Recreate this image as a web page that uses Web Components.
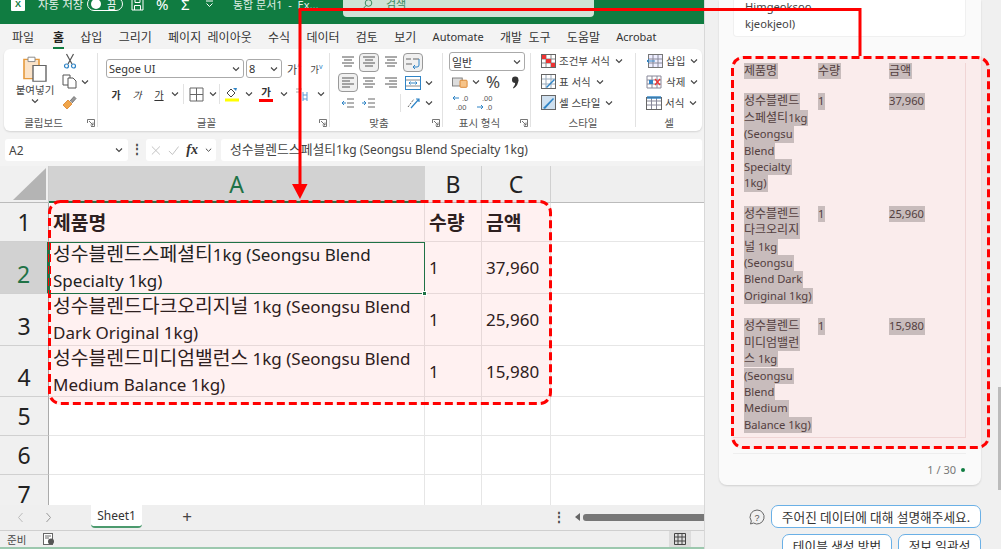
<!DOCTYPE html>
<html lang="ko">
<head>
<meta charset="utf-8">
<title>Excel</title>
<style>
  html, body { margin: 0; height: 100%; overflow: hidden; background: #f0f0f0; }
  body { font-family: "Noto Sans", "Noto Sans CJK KR", sans-serif; }
</style>
</head>
<body>
<excel-page></excel-page>
<script>
const FONT = `"Noto Sans", "Noto Sans CJK KR", sans-serif`;
const chev = `<svg width="8" height="8" viewBox="0 0 8 8"><path d="M1 2.5 4 5.5 7 2.5" fill="none" stroke="#444" stroke-width="1.1"/></svg>`;
// hangul runs are set a little larger than latin, as in the reference
const ko = s => s.replace(/[\uAC00-\uD7A3]+/g, m => `<span class="k">${m}</span>`);

const ICONS = {
  paste: `<svg width="26" height="28" viewBox="0 0 26 32" preserveAspectRatio="none"><path d="M2 5h15v22H2z" fill="#fbe3c8" stroke="#e59a3e" stroke-width="1.6"/><path d="M6 2.500h7v5H6z" fill="#fff" stroke="#888"/><path d="M11 12h13v18H11z" fill="#fff" stroke="#666" stroke-width="1.4"/></svg>`,
  cut: `<svg width="14" height="16" viewBox="0 0 14 16"><path d="M3.500 1 9 11M10.500 1 5 11" stroke="#555" stroke-width="1.2" fill="none"/><circle cx="3.500" cy="13" r="2" fill="none" stroke="#2f84c6" stroke-width="1.2"/><circle cx="10.500" cy="13" r="2" fill="none" stroke="#2f84c6" stroke-width="1.2"/></svg>`,
  copy: `<svg width="16" height="15" viewBox="0 0 16 15"><path d="M1 1h7v10H1z" fill="#fff" stroke="#555"/><path d="M6 4h5l3 3v7H6z" fill="#fff" stroke="#555"/></svg>`,
  brush: `<svg width="15" height="15" viewBox="0 0 15 15"><path d="M1 10 6 5l4 4-5 5z" fill="#f0a54a" stroke="#d9822b" stroke-width=".8"/><path d="M8 6l4-4.500 2 2L10 8" fill="#999" stroke="#666" stroke-width=".8"/></svg>`,
  borders: `<svg width="15" height="15" viewBox="0 0 15 15"><path d="M1 1h13v13H1zM7.500 1v13M1 7.500h13" fill="none" stroke="#666"/></svg>`,
  fill: `<svg width="14" height="16" viewBox="0 0 14 16"><path d="M2 7l4-4 4 4-4 4z" fill="#fff" stroke="#444"/><path d="M8 2l3 3 1-3z" fill="#2f84c6"/><rect y="12.500" width="14" height="3" fill="#ffff00"/></svg>`,
  wrapPh: `<svg width="15" height="15" viewBox="0 0 15 15"><path d="M8 5v9M12 5v9M8 8h4M8 12h4" stroke="#5b9bd5" fill="none"/><path d="M1 2h6M1 5h5" stroke="#aaa"/></svg>`,
  lines(a, b, c, d) {
    const p = [a, b, c, d].map((w, i) => `M${w[0]} ${2 + i * 3}H${w[1]}`).join('');
    return `<svg width="14" height="14" viewBox="0 0 14 14"><path d="${p}" stroke="#555" fill="none"/></svg>`;
  },
  wrap: `<svg width="18" height="18" viewBox="0 0 18 18"><path d="M2 6h5M9 6h6M2 11h6" stroke="#666" fill="none"/><path d="M15 6v6q0 2-2 2H9m2-2-2 2 2 2" stroke="#2f84c6" fill="none"/></svg>`,
  merge: `<svg width="16" height="14" viewBox="0 0 16 14"><rect x=".5" y=".5" width="15" height="13" fill="#fff" stroke="#2f84c6"/><path d="M1 4h14M1 10h14" stroke="#888"/><path d="M4 7h8M5.500 5.500 4 7l1.500 1.500M10.500 5.500 12 7l-1.500 1.500" stroke="#2f84c6" fill="none"/></svg>`,
  indentL: `<svg width="14" height="14" viewBox="0 0 14 14"><path d="M6 3h7M6 7h7M6 11h7" stroke="#666"/><path d="M5 7H1m2-2L1 7l2 2" stroke="#2f84c6" fill="none"/></svg>`,
  indentR: `<svg width="14" height="14" viewBox="0 0 14 14"><path d="M6 3h7M6 7h7M6 11h7" stroke="#666"/><path d="M0 7h4M2 5l2 2-2 2" stroke="#2f84c6" fill="none"/></svg>`,
  orient: `<svg width="16" height="14" viewBox="0 0 16 14"><path d="M3 11 9 3" stroke="#666" stroke-dasharray="2 1.200"/><path d="M6 12 14 3m-3 0h3v3" stroke="#2f84c6" fill="none" stroke-width="1.200"/></svg>`,
  currency: `<svg width="16" height="14" viewBox="0 0 18 14"><rect x=".5" y="2.500" width="11" height="9" fill="#ddd" stroke="#777"/><rect x="9" y="5" width="8" height="8" rx="1" fill="#f6c48a" stroke="#d9822b"/></svg>`,
  comma: `<svg width="8" height="13" viewBox="0 0 8 13"><circle cx="4.200" cy="3.700" r="3.200" fill="#333"/><path d="M7.400 3.700Q7.600 9 2.500 12.500L2 11.800Q4.500 9 4.300 6z" fill="#333"/></svg>`,
  decUp: `<svg width="20" height="18" viewBox="0 0 20 18"><path d="M7 4H1m2-2L1 4l2 2" stroke="#2f84c6" fill="none"/><text x="10" y="7" font-size="7.500" font-family="Liberation Sans" fill="#555">.0</text><text x="4" y="16" font-size="7.500" font-family="Liberation Sans" fill="#555">.00</text></svg>`,
  decDown: `<svg width="20" height="18" viewBox="0 0 20 18"><text x="6" y="7" font-size="7.500" font-family="Liberation Sans" fill="#555">.00</text><path d="M1 13h6m-2-2 2 2-2 2" stroke="#2f84c6" fill="none"/><text x="10" y="16" font-size="7.500" font-family="Liberation Sans" fill="#555">.0</text></svg>`,
  cond: `<svg width="15" height="14" viewBox="0 0 15 14"><rect x=".5" y=".5" width="14" height="13" fill="#fff" stroke="#666"/><path d="M5 1v12M10 1v12M1 5h13M1 9h13" stroke="#888"/><rect x="1" y="1" width="4" height="4" fill="#e33"/><rect x="5" y="5" width="5" height="4" fill="#e33"/><rect x="10" y="9" width="4" height="4" fill="#e33"/></svg>`,
  table: `<svg width="15" height="15" viewBox="0 0 15 15"><rect x=".5" y=".5" width="14" height="14" fill="#fff" stroke="#666"/><path d="M1 5h13M1 10h13M5 1v13M10 1v13" stroke="#9ab"/><path d="M5 13 13 5l1 1-8 8z" fill="#2f84c6"/></svg>`,
  cellStyle: `<svg width="15" height="15" viewBox="0 0 15 15"><rect x=".5" y=".5" width="14" height="14" fill="#cfe0ef" stroke="#666"/><path d="M2 13 12 3l1 1L4 14z" fill="#2f84c6"/></svg>`,
  insert: `<svg width="17" height="14" viewBox="0 0 17 14"><rect x="2.500" y=".5" width="14" height="13" fill="#eef" stroke="#777"/><path d="M7 1v12M12 1v12M3 5h13M3 9h13" stroke="#889"/><path d="M9 7H1m2-2L1 7l2 2" stroke="#2f84c6" fill="none"/></svg>`,
  del: `<svg width="17" height="14" viewBox="0 0 17 14"><path d="M1 1h14v12H1zM1 5h14M1 9h14M6 1v12M11 1v12" stroke="#889" fill="#fff"/><path d="M9 4l5 6m0-6-5 6" stroke="#e33" stroke-width="1.300"/><rect x="3" y="5" width="4" height="4" fill="#2f84c6"/></svg>`,
  format: `<svg width="16" height="15" viewBox="0 0 16 15"><rect x=".5" y="2.500" width="15" height="12" fill="#fff" stroke="#666"/><path d="M1 6h14M1 10h14M5.500 3v11M10.500 3v11" stroke="#889"/><rect x="1" y="1" width="14" height="3" fill="#2f84c6" opacity=".7"/></svg>`,
  launcher: `<svg width="8" height="8" viewBox="0 0 8 8"><path d="M.5 4V.5H7.500V7.500H4M2 2l4 4M6 3.500V6H3.500" fill="none" stroke="#666" stroke-width=".9"/></svg>`
};

class ExcelPage extends HTMLElement {
  constructor() {
    super();
    this.attachShadow({ mode: 'open' });
    this.shadowRoot.innerHTML = `
      <style>
        :host { display: flex; width: 1001px; height: 549px; position: relative; overflow: hidden; font-family: ${FONT}; }
        excel-window { width: 705px; flex: none; }
        chat-panel { flex: 1; }
      </style>
      <excel-window></excel-window>
      <chat-panel></chat-panel>
      <note-overlay></note-overlay>
    `;
  }
}

class ExcelWindow extends HTMLElement {
  constructor() {
    super();
    this.attachShadow({ mode: 'open' });
    this.shadowRoot.innerHTML = `
      <style>
        :host { display: flex; flex-direction: column; height: 549px; background: #f3f3f3; border-right: 1px solid #d8d8d8; box-sizing: border-box; }
        sheet-grid { flex: none; }
      </style>
      <title-bar></title-bar>
      <ribbon-tabs></ribbon-tabs>
      <ribbon-bar></ribbon-bar>
      <formula-bar></formula-bar>
      <sheet-grid></sheet-grid>
      <sheet-tabs></sheet-tabs>
      <status-bar></status-bar>
    `;
  }
}

class TitleBar extends HTMLElement {
  constructor() {
    super();
    this.attachShadow({ mode: 'open' });
    this.shadowRoot.innerHTML = `
      <style>
        :host { display: block; height: 24px; background: #107c41; color: #fff; overflow: hidden; font-size: 11px; flex: none; }
        .row { display: flex; align-items: center; height: 8px; }
        .logo { width: 14px; height: 13px; margin-left: 11px; background: #fff; color: #107c41; font: 700 9px "Liberation Sans", sans-serif; display: flex; align-items: center; justify-content: center; border-radius: 1px; }
        .auto { margin-left: 13px; width: 49px; white-space: nowrap; color: #e8f2ec; font-size: 11.500px; }
        .toggle { width: 36px; height: 14px; border: 1px solid #fff; border-radius: 8px; box-sizing: border-box; display: flex; align-items: center; gap: 6px; padding-left: 3px; font-size: 10px; }
        .toggle i { width: 10px; height: 10px; background: #fff; border-radius: 50%; display: block; }
        .sym { margin-left: 8px; display: flex; align-items: center; font-size: 15px; width: 102px; }
        .sym > * { flex: none; }
        .doc { width: 110px; white-space: nowrap; color: #dfeee5; }
        .search { align-self: flex-start; width: 251px; height: 17px; background: #cfe3d6; border-radius: 0 0 4px 4px; color: #3c8a60; display: flex; align-items: center; gap: 13px; padding-left: 20px; box-sizing: border-box; font-size: 11px; line-height: 8px; }
        .search span, .search svg { position: relative; top: -5px; }
      </style>
      <div class="row">
        <div class="logo">X</div>
        <div class="auto">자동 저장</div>
        <div class="toggle"><i></i><span>끔</span></div>
        <div class="sym">
          <svg width="13" height="13" viewBox="0 0 13 13"><path d="M1 1h11v11H1zM4 1v3.500h5V1M3.500 12V7.500h6V12" fill="none" stroke="#fff"/></svg>
          <span style="margin-left:12px;width:17px">%</span>
          <span style="margin-left:8px;width:11px">Σ</span>
          <svg style="margin-left:13px" width="9" height="8" viewBox="0 0 9 8"><path d="M1 1h7M1.500 3.500 4.500 6.500l3-3" fill="none" stroke="#fff"/></svg>
        </div>
        <div class="doc">통합 문서1 &nbsp;- &nbsp;Ex...</div>
        <div class="search">
          <svg width="10" height="10" viewBox="0 0 10 10"><circle cx="5.500" cy="4" r="3.300" fill="none" stroke="#3c8a60"/><path d="M3 6.500.8 9" stroke="#3c8a60"/></svg>
          <span>검색</span>
        </div>
      </div>
    `;
  }
}

class RibbonTabs extends HTMLElement {
  constructor() {
    super();
    this.attachShadow({ mode: 'open' });
    const tabs = ['파일', '홈', '삽입', '그리기', '페이지 레이아웃', '수식', '데이터', '검토', '보기', 'Automate', '개발 도구', '도움말', 'Acrobat'];
    this.shadowRoot.innerHTML = `
      <style>
        :host { display: flex; flex: none; height: 25px; gap: 16.300px; padding-left: 12px; align-items: center; font-size: 11px; color: #333; white-space: nowrap; background: #f3f3f3; box-sizing: border-box; word-spacing: 3.500px; }
        .t { position: relative; }
        .k { font-size: 12px; }
        .on { color: #222; font-weight: 600; margin-left: 2.500px; }
        .on::after { content: ""; position: absolute; left: 0; right: 0; bottom: -3px; height: 2px; background: #107c41; }
      </style>
      ${tabs.map(t => `<span class="t ${t === '홈' ? 'on' : ''}">${ko(t)}</span>`).join('')}
    `;
  }
}

class RibbonGroup extends HTMLElement {
  constructor() {
    super();
    this.attachShadow({ mode: 'open' });
    const launcher = this.hasAttribute('launcher');
    this.shadowRoot.innerHTML = `
      <style>
        :host { display: flex; flex-direction: column; position: relative; box-sizing: border-box; border-right: 1px solid #e2e2e2; font-size: 10.500px; color: #444; margin-top: 4px; height: 74px; }
        :host(:last-child) { border-right: 0; }
        .body { flex: 1; min-height: 0; }
        .label { height: 17px; margin-bottom: -4px; display: flex; align-items: center; justify-content: center; font-size: 10.500px; color: #555; padding-right: ${launcher ? 14 : 0}px; flex: none; }
        .launch { position: absolute; right: 2px; bottom: 0; line-height: 0; }
      </style>
      <div class="body"><slot></slot></div>
      <div class="label">${this.getAttribute('label')}</div>
      ${launcher ? `<div class="launch">${ICONS.launcher}</div>` : ''}
    `;
  }
}

class RibbonBar extends HTMLElement {
  constructor() {
    super();
    this.attachShadow({ mode: 'open' });
    const L = ICONS.lines;
    const C = [[1, 13], [3, 11], [1, 13], [3, 11]], LF = [[1, 13], [1, 9], [1, 13], [1, 9]], RT = [[1, 13], [5, 13], [1, 13], [5, 13]];
    const styleRow = (ic, t) => `<div class="srow">${ic}<span>${t}</span>${chev}</div>`;
    this.shadowRoot.innerHTML = `
      <style>
        :host { display: flex; flex: none; height: 82px; margin: 0 2px 0 4px; background: #fff; border-radius: 6px; box-shadow: 0 1px 2px #0002; box-sizing: border-box; color: #444; font-size: 10.500px; }
        .row { display: flex; align-items: center; }
        /* clipboard */
        .clip { display: flex; padding: 2px 0 0 11px; gap: 7px; }
        .paste { width: 40px; display: flex; flex-direction: column; align-items: center; font-size: 10.500px; white-space: nowrap; line-height: 14px; }
        .clip .tools { display: grid; grid-auto-rows: 21px; align-items: center; margin-top: -5px; justify-items: start; }
        /* font */
        .font { padding: 6px 0 0 8px; }
        .sel { height: 19px; border: 1px solid #aaa; border-radius: 3px; box-sizing: border-box; display: flex; align-items: center; justify-content: space-between; padding: 0 3px 0 2px; background: #fff; font-size: 11px; color: #333; }
        .btn { display: flex; justify-content: center; align-items: center; }
        .f2 { margin-top: 6px; height: 20px; }
        .f2 b, .f2 em, .f2 u { font-size: 10px; color: #333; }
        .sep { width: 1px; height: 20px; background: #e2e2e2; }
        .color { display: flex; flex-direction: column; align-items: center; width: 14px; line-height: 11px; font-weight: 700; color: #333; }
        .color::after { content: ""; width: 14px; height: 3px; background: #ff0000; margin-top: 1px; }
        /* align */
        .align { display: grid; grid-template-columns: 21px 22px 21px 23px 10px; grid-auto-rows: 20.500px; padding: 0 0 0 7px; margin-top: -1px; align-items: center; justify-items: center; }
        .selbox { width: 20px; height: 19px; border: 1px solid #999; background: #f0f0f0; border-radius: 4px; box-sizing: border-box; display: flex; align-items: center; justify-content: center; }
        /* number */
        .num { padding: 0 0 0 6px; margin-top: -1px; }
        .num .sel { width: 76px; }
        .num .r { margin-top: 2px; height: 18px; }
        .pct { font-size: 17px; line-height: 18px; color: #444; }
        /* style, cell */
        .stack { display: flex; flex-direction: column; gap: 4px; padding: 0 0 0 10px; margin-top: -1px; }
        .srow { display: flex; align-items: center; gap: 3px; height: 17px; white-space: nowrap; font-size: 10.500px; }
        .srow svg:last-child { margin-left: 2px; }
      </style>
      <ribbon-group label="클립보드" launcher style="width:94px">
        <div class="clip">
          <div class="paste">${ICONS.paste}<span>붙여넣기</span>${chev}</div>
          <div class="tools"><span style="margin-left:1px;line-height:0">${ICONS.cut}</span><div class="row" style="gap:3px">${ICONS.copy}${chev}</div>${ICONS.brush}</div>
        </div>
      </ribbon-group>
      <ribbon-group label="글꼴" launcher style="width:232px">
        <div class="font">
          <div class="row">
            <div class="sel" style="width:138px"><span>Segoe UI</span>${chev}</div>
            <div class="sel" style="width:36px;margin-left:2px"><span>8</span>${chev}</div>
            <span style="margin-left:5px;font-size:11px">가<sup style="font-size:7px;color:#2f84c6;line-height:0">^</sup></span>
            <span style="margin-left:9px;font-size:9.500px">가<sup style="font-size:7px;color:#2f84c6;line-height:0">v</sup></span>
          </div>
          <div class="row f2">
            <span class="btn" style="width:20px"><b>가</b></span>
            <span class="btn" style="width:22px"><em>가</em></span>
            <span class="btn" style="width:22px"><u>가</u></span>
            <span class="btn" style="width:10px">${chev}</span>
            <span class="sep" style="margin-left:3px"></span>
            <span class="btn" style="width:24px">${ICONS.borders}</span>
            <span class="btn" style="width:9px">${chev}</span>
            <span class="sep" style="margin-left:2px"></span>
            <span class="btn" style="width:24px">${ICONS.fill}</span>
            <span class="btn" style="width:9px">${chev}</span>
            <span class="btn" style="width:26px"><span class="color">가</span></span>
            <span class="btn" style="width:9px">${chev}</span>
            <span class="btn" style="width:28px">${ICONS.wrapPh}</span>
            <span class="btn" style="width:9px">${chev}</span>
          </div>
        </div>
      </ribbon-group>
      <ribbon-group label="맞춤" launcher style="width:113px">
        <div class="align">
          ${L(...C)}<div class="selbox">${L(...C)}</div>${L(...C)}<div class="selbox">${ICONS.wrap}</div><span></span>
          <div class="selbox">${L(...LF)}</div>${L(...C)}${L(...RT)}${ICONS.merge}${chev}
          ${ICONS.indentL}${ICONS.indentR}<span style="width:1px;height:18px;background:#e2e2e2;justify-self:end"></span>${ICONS.orient}${chev}
        </div>
      </ribbon-group>
      <ribbon-group label="표시 형식" launcher style="width:88px">
        <div class="num">
          <div class="sel"><span>일반</span>${chev}</div>
          <div class="row r" style="padding-left:3px;gap:4px">${ICONS.currency}${chev}<span class="pct" style="margin-left:2px">%</span><span style="margin-left:7px;line-height:0">${ICONS.comma}</span></div>
          <div class="row r" style="padding-left:3px;margin-top:3px;gap:4px">${ICONS.decUp}${ICONS.decDown}</div>
        </div>
      </ribbon-group>
      <ribbon-group label="스타일" style="width:105px">
        <div class="stack">
          ${styleRow(ICONS.cond, '조건부 서식')}
          ${styleRow(ICONS.table, '표 서식')}
          ${styleRow(ICONS.cellStyle, '셀 스타일')}
        </div>
      </ribbon-group>
      <ribbon-group label="셀" style="width:66px">
        <div class="stack">
          ${styleRow(ICONS.insert, '삽입')}
          ${styleRow(ICONS.del, '삭제')}
          ${styleRow(ICONS.format, '서식')}
        </div>
      </ribbon-group>
    `;
  }
}

class FormulaBar extends HTMLElement {
  constructor() {
    super();
    this.attachShadow({ mode: 'open' });
    this.shadowRoot.innerHTML = `
      <style>
        :host { display: flex; flex: none; height: 22px; margin: 8px 2px 5px 5px; gap: 0; align-items: stretch; font-size: 12px; color: #444; }
        .box { background: #fff; border-radius: 3px; display: flex; align-items: center; box-sizing: border-box; }
        .name { width: 123px; padding: 0 5px 0 4px; justify-content: space-between; }
        .dots { width: 18px; text-align: center; line-height: 20px; font-weight: 700; }
        .fx { width: 70px; padding: 0 4px 0 5px; gap: 7px; }
        .fx i { font: italic 700 14px "Liberation Serif", serif; color: #333; }
        .input { flex: 1; margin-left: 5px; padding-left: 9px; white-space: nowrap; overflow: hidden; display: block; line-height: 21px; }
        .k { font-size: 12.800px; }
      </style>
      <div class="box name"><span>A2</span>${chev}</div>
      <div class="dots">⋮</div>
      <div class="box fx">
        <svg width="11" height="11" viewBox="0 0 11 11"><path d="M1 1l9 9m0-9-9 9" stroke="#bbb" fill="none"/></svg>
        <svg width="13" height="11" viewBox="0 0 13 11"><path d="M1 6l4 4 7-9" stroke="#bbb" fill="none"/></svg>
        <i>fx</i>${chev}
      </div>
      <div class="box input">${ko('성수블렌드스페셜티1kg (Seongsu Blend Specialty 1kg)')}</div>
    `;
  }
}

class SheetGrid extends HTMLElement {
  constructor() {
    super();
    this.attachShadow({ mode: 'open' });
    const data = [
      ['성수블렌드스페셜티1kg (Seongsu Blend Specialty 1kg)', '1', '37,960'],
      ['성수블렌드다크오리지널 1kg (Seongsu Blend Dark Original 1kg)', '1', '25,960'],
      ['성수블렌드미디엄밸런스 1kg (Seongsu Blend Medium Balance 1kg)', '1', '15,980']
    ];
    let rows = `<div class="rh">1</div><div class="c b">${ko('제품명')}</div><div class="c b">${ko('수량')}</div><div class="c b">${ko('금액')}</div><div class="c e"></div>`;
    data.forEach((r, i) => {
      rows += `<div class="rh ${i === 0 ? 'sel' : ''}">${i + 2}</div>
        <div class="c a ${i === 0 ? 'active' : ''}"><span>${ko(r[0])}</span></div><div class="c">${r[1]}</div><div class="c">${r[2]}</div><div class="c e"></div>`;
    });
    [5, 6, 7].forEach(n => {
      rows += `<div class="rh">${n}</div><div class="c"></div><div class="c"></div><div class="c"></div><div class="c e"></div>`;
    });
    this.shadowRoot.innerHTML = `
      <style>
        :host { display: grid; flex: none; height: 339px; grid-template-columns: 49px 376px 57px 69px 1fr; grid-template-rows: 37px 39px 52px 52px 51px 39px 39px 39px; background: #fff; overflow: hidden; color: #222; }
        .corner { background: #f0f0f0; border-bottom: 1px solid #bbb; border-right: 1px solid #ccc; display: flex; align-items: flex-end; justify-content: flex-end; padding: 0 2px 2px 0; box-sizing: border-box; }
        .ch { background: #efefef; border-right: 1px solid #d0d0d0; border-bottom: 1px solid #bbb; display: flex; align-items: center; justify-content: center; font-size: 23px; box-sizing: border-box; color: #222; }
        .ch.sel { background: #d2d2d2; color: #1f7246; border-bottom: 2px solid #1f7246; border-right-color: #d2d2d2; }
        .ch.e { border-right: 0; }
        .rh { background: #f0f0f0; border-bottom: 1px solid #d0d0d0; border-right: 1px solid #aaa; box-sizing: border-box; display: flex; justify-content: center; align-items: flex-end; font-size: 23px; line-height: 38px; color: #222; }
        .rh.sel { background: #d2d2d2; color: #1f7246; border-right: 2px solid #1f7246; }
        .c { border-right: 1px solid #e6e6e6; border-bottom: 1px solid #e6e6e6; box-sizing: border-box; font-size: 17px; display: flex; align-items: center; padding-left: 4px; white-space: nowrap; position: relative; }
        .c.b { font-weight: 700; }
        .c.a { white-space: normal; line-height: 26px; padding-right: 4px; }
        .c.e { border-right: 0; }
        .k { font-size: 19.300px; }
        .active { outline: 1.500px solid #1f7246; outline-offset: -1px; z-index: 1; }
        .active::after { content: ""; position: absolute; right: -3px; bottom: -3px; background: #1f7246; border: 1px solid #fff; width: 3px; height: 3px; }
      </style>
      <div class="corner"><svg width="33" height="32" viewBox="0 0 33 32"><path d="M33 0V32H0z" fill="#b4b4b4"/></svg></div>
      <div class="ch sel">A</div><div class="ch">B</div><div class="ch">C</div><div class="ch e"></div>
      ${rows}
    `;
  }
}

class SheetTabs extends HTMLElement {
  constructor() {
    super();
    this.attachShadow({ mode: 'open' });
    this.shadowRoot.innerHTML = `
      <style>
        :host { display: flex; flex: none; height: 26px; align-items: flex-start; background: #efefef; border-bottom: 1px solid #cfcfcf; box-sizing: border-box; color: #444; font-size: 12px; }
        .nav { width: 91px; height: 24px; display: flex; align-items: center; gap: 21px; padding-left: 17px; box-sizing: border-box; }
        .tab { width: 51px; height: 23px; background: #fff; border-radius: 0 0 4px 4px; text-align: center; line-height: 22px; box-sizing: border-box; border-bottom: 2px solid #4c9a6e; color: #333; }
        .plus { margin-left: 35px; width: 20px; line-height: 24px; font-size: 17px; text-align: center; color: #444; }
        .dots { margin-left: 356px; line-height: 24px; font-weight: 700; width: 10px; }
        .scroll { margin-left: 12px; display: flex; align-items: center; gap: 3px; height: 24px; flex: 1; }
        .thumb { flex: 1; height: 7px; background: #777; border-radius: 3px 0 0 3px; }
      </style>
      <div class="nav">
        <svg width="7" height="11" viewBox="0 0 7 11"><path d="M5.500 1 1.500 5.500l4 4.500" fill="none" stroke="#bbb"/></svg>
        <svg width="7" height="11" viewBox="0 0 7 11"><path d="M1.500 1l4 4.500-4 4.500" fill="none" stroke="#999"/></svg>
      </div>
      <div class="tab">Sheet1</div>
      <div class="plus">+</div>
      <div class="dots">⋮</div>
      <div class="scroll">
        <svg width="5" height="8" viewBox="0 0 5 8"><path d="M5 0v8L0 4z" fill="#666"/></svg>
        <div class="thumb"></div>
      </div>
    `;
  }
}

class StatusBar extends HTMLElement {
  constructor() {
    super();
    this.attachShadow({ mode: 'open' });
    this.shadowRoot.innerHTML = `
      <style>
        :host { display: flex; flex: 1; align-items: center; background: #efefef; border-bottom: 2px solid #9cc8ae; box-sizing: border-box; font-size: 10.500px; color: #444; padding-left: 7px; min-height: 0; }
        .rec { margin-left: 17px; line-height: 0; }
        .view { margin-left: auto; margin-right: 13px; width: 22px; height: 16px; background: #dcdcdc; display: flex; align-items: center; justify-content: center; }
      </style>
      <span>준비</span>
      <span class="rec"><svg width="12" height="12" viewBox="0 0 12 12"><rect x=".5" y=".5" width="9" height="11" fill="#fff" stroke="#666"/><path d="M2 3h6M2 5h4" stroke="#666"/><circle cx="8" cy="8.500" r="3" fill="#555"/></svg></span>
      <span class="view"><svg width="12" height="12" viewBox="0 0 12 12"><path d="M.5.500h11v11H.5zM4 .500v11M8 .500v11M.5 4h11M.5 8h11" fill="none" stroke="#444"/></svg></span>
    `;
  }
}

class ChatPanel extends HTMLElement {
  constructor() {
    super();
    this.attachShadow({ mode: 'open' });
    const line = t => `<span class="hl">${ko(t)}</span><br>`;
    const rows = [
      [['성수블렌드', '스페셜티1kg', '(Seongsu', 'Blend', 'Specialty', '1kg)'], '37,960'],
      [['성수블렌드', '다크오리지', '널 1kg', '(Seongsu', 'Blend Dark', 'Original 1kg)'], '25,960'],
      [['성수블렌드', '미디엄밸런', '스 1kg', '(Seongsu', 'Blend', 'Medium', 'Balance 1kg)'], '15,980']
    ];
    this.shadowRoot.innerHTML = `
      <style>
        :host { display: flex; flex-direction: column; height: 549px; background: #f0f0f0; padding: 0 20px 0 14px; box-sizing: border-box; position: relative; font-size: 11.200px; color: #444; overflow: hidden; }
        .k { font-size: 12px; }
        .card { height: 485px; flex: none; background: #fafafa; border-radius: 0 0 8px 8px; box-shadow: 0 1px 2px #0002; padding: 0 15px 0 14px; box-sizing: border-box; display: flex; flex-direction: column; }
        .prev { height: 37px; flex: none; background: #fff; border: 1px solid #f0f0f0; border-top: 0; border-radius: 0 0 4px 4px; display: flex; flex-direction: column; justify-content: flex-end; padding: 0 0 4px 11px; line-height: 17px; box-sizing: border-box; overflow: hidden; white-space: nowrap; }
        .tbl { margin-top: 26px; display: grid; grid-template-columns: 74px 71px 1fr; row-gap: 14px; height: 375px; align-content: start; padding-left: 11px; line-height: 16.400px; border-right: 1px solid #f0e2e2; border-bottom: 1px solid #f0e2e2; box-sizing: border-box; flex: none; }
        .hl { display: inline-block; height: 16.400px; vertical-align: top; background: #c5c7c7; color: #4a4444; padding-right: 1px; }
        .foot { margin-top: 15px; border-top: 1px solid #eee; flex: 1; display: flex; align-items: center; justify-content: flex-end; gap: 5px; font-size: 11px; color: #777; padding-right: 1px; }
        .dot { width: 4px; height: 4px; border-radius: 50%; background: #107c41; }
        .sugg { display: flex; flex-direction: column; align-items: flex-end; gap: 6px; margin-top: 20px; }
        .r { display: flex; gap: 6px; align-items: center; }
        .pill { height: 23px; border: 1px solid #6ab0e6; border-radius: 7px; background: #fff; display: flex; align-items: center; justify-content: center; font-size: 12.700px; color: #333; box-sizing: border-box; white-space: nowrap; }
        .sb { position: absolute; right: 0; top: 387px; width: 3px; height: 103px; background: #bbb; }
      </style>
      <div class="card">
        <div class="prev"><div>Himgeoksoo</div><div>kjeokjeol)</div></div>
        <div class="tbl">
          <div><span class="hl">${ko('제품명')}</span></div><div><span class="hl">${ko('수량')}</span></div><div><span class="hl">${ko('금액')}</span></div>
          ${rows.map(r => `<div>${r[0].map(line).join('')}</div><div><span class="hl">1</span></div><div><span class="hl">${r[1]}</span></div>`).join('')}
        </div>
        <div class="foot"><span>1 / 30</span><span class="dot"></span></div>
      </div>
      <div class="sugg">
        <div class="r">
          <svg width="16" height="16" viewBox="0 0 16 16"><path d="M8 1a7 7 0 1 1-3.500 13L1.500 15l.8-3A7 7 0 0 1 8 1z" fill="none" stroke="#666"/><text x="8" y="11.500" text-anchor="middle" font-size="9" font-family="Liberation Sans" fill="#555">?</text></svg>
          <div class="pill" style="width:210px">주어진 데이터에 대해 설명해주세요.</div>
        </div>
        <div class="r"><div class="pill" style="width:110px">테이블 생성 방법</div><div class="pill" style="width:83px">정보 일관성</div></div>
      </div>
      <div class="sb"></div>
    `;
  }
}

class NoteOverlay extends HTMLElement {
  constructor() {
    super();
    this.attachShadow({ mode: 'open' });
    this.shadowRoot.innerHTML = `
      <style>
        :host { position: absolute; inset: 0; pointer-events: none; }
        .box { position: absolute; border-radius: 12px; background: rgba(255, 0, 0, .055); box-sizing: border-box; }
        svg { position: absolute; left: 0; top: 0; }
      </style>
      <div class="box" style="left:48px;top:200px;width:504px;height:205px"></div>
      <div class="box" style="left:731px;top:56px;width:259px;height:393px"></div>
      <svg width="1001" height="549" viewBox="0 0 1001 549">
        <rect x="49.500" y="201.500" width="501" height="202" rx="11" fill="none" stroke="#f00" stroke-width="3" stroke-dasharray="8 4"/>
        <rect x="732.500" y="57.500" width="256" height="390" rx="11" fill="none" stroke="#f00" stroke-width="3" stroke-dasharray="8 4"/>
        <path d="M860 56V9.500H300V186" fill="none" stroke="#f00" stroke-width="3"/>
        <path d="M292 184H307.500L300 199z" fill="#f00"/>
      </svg>
    `;
  }
}

customElements.define('excel-page', ExcelPage);
customElements.define('excel-window', ExcelWindow);
customElements.define('title-bar', TitleBar);
customElements.define('ribbon-tabs', RibbonTabs);
customElements.define('ribbon-group', RibbonGroup);
customElements.define('ribbon-bar', RibbonBar);
customElements.define('formula-bar', FormulaBar);
customElements.define('sheet-grid', SheetGrid);
customElements.define('sheet-tabs', SheetTabs);
customElements.define('status-bar', StatusBar);
customElements.define('chat-panel', ChatPanel);
customElements.define('note-overlay', NoteOverlay);
</script>
</body>
</html>
